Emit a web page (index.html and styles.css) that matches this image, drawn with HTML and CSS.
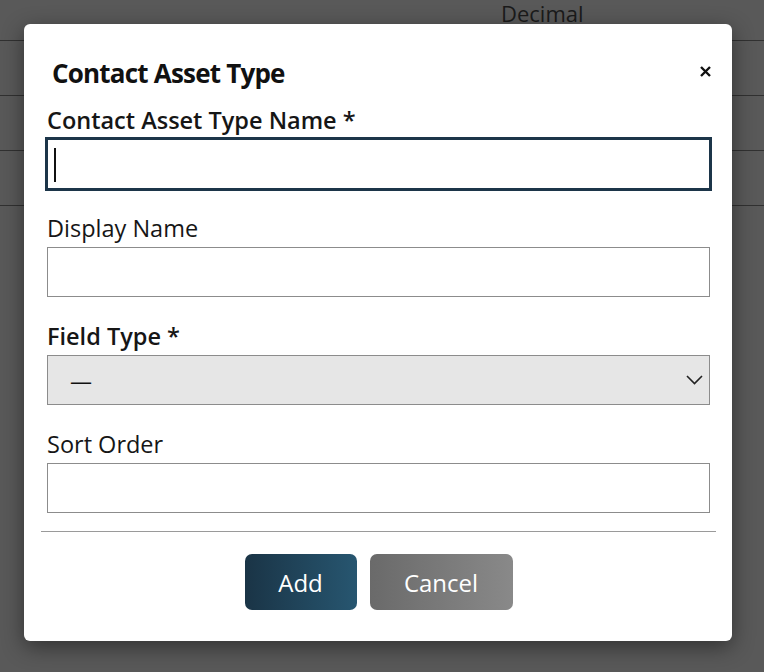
FILE: index.html
```html
<!DOCTYPE html>
<html lang="en">
<head>
<meta charset="utf-8">
<title>Contact Asset Type</title>
<link rel="stylesheet" href="styles.css">
</head>
<body>
<div class="bg-table">
  <div class="bg-row bg-head"><span></span><span class="bg-cell">Decimal</span></div>
  <div class="bg-row"></div>
  <div class="bg-row"></div>
  <div class="bg-row"></div>
</div>

<div class="modal">
  <button class="close" type="button" aria-label="Close">
    <svg width="11" height="11" viewBox="0 0 11 11"><path d="M1 1 L10 10 M10 1 L1 10" stroke="#111" stroke-width="2.4" stroke-linecap="butt" fill="none"/></svg>
  </button>
  <div class="modal-body">
    <h2 class="title">Contact Asset Type</h2>

    <div class="field">
      <label class="label strong">Contact Asset Type Name *</label>
      <div class="input-wrap">
        <input class="input focused" type="text">
        <span class="caret"></span>
      </div>
    </div>

    <div class="field">
      <label class="label">Display Name</label>
      <input class="input" type="text">
    </div>

    <div class="field">
      <label class="label strong">Field Type *</label>
      <div class="input-wrap">
        <select class="input select"><option>—</option></select>
        <svg class="chevron" width="17" height="10" viewBox="0 0 17 10"><path d="M1 1 L8.5 8.5 L16 1" stroke="#222" stroke-width="1.6" fill="none"/></svg>
      </div>
    </div>

    <div class="field last">
      <label class="label">Sort Order</label>
      <input class="input" type="text">
    </div>
  </div>

  <div class="divider"></div>

  <div class="actions">
    <button class="btn btn-add" type="button">Add</button>
    <button class="btn btn-cancel" type="button">Cancel</button>
  </div>
</div>
</body>
</html>
```

FILE: styles.css
```css
html, body {
  margin: 0;
  padding: 0;
}
body {
  width: 764px;
  height: 672px;
  overflow: hidden;
  background: #595959;
  font-family: "Open Sans", "Liberation Sans", sans-serif;
  color: #111;
  position: relative;
}

.bg-row {
  height: 54px;
  border-bottom: 1px solid #313131;
  display: grid;
  grid-template-columns: 501px 1fr;
}
.bg-head {
  height: 40px;
}
.bg-cell {
  font-size: 22px;
  line-height: 26px;
  color: #1b1b1b;
}

.modal {
  position: absolute;
  left: 24px;
  top: 24px;
  width: 708px;
  box-sizing: border-box;
  padding: 32px 16px 31px 17px;
  background: #fff;
  border-radius: 6px;
  box-shadow: 0 6px 22px rgba(0, 0, 0, 0.45);
}

.close {
  position: absolute;
  left: 676px;
  top: 42px;
  margin: 0;
  padding: 0;
  border: 0;
  background: none;
  width: 11px;
  height: 11px;
  display: block;
}
.close svg { display: block; }

.modal-body {
  padding: 0 6px;
}

.title {
  margin: 0 0 16px 5px;
  font-size: 26px;
  font-weight: 700;
  line-height: 34px;
  letter-spacing: -0.8px;
  color: #111;
}

.field {
  margin-bottom: 25px;
}
.field.last {
  margin-bottom: 0;
}

.label {
  display: block;
  font-size: 23.5px;
  line-height: 29px;
  margin-bottom: 4px;
  color: #161616;
}
.label.strong {
  font-weight: 600;
}

.input-wrap {
  position: relative;
}

.input {
  display: block;
  width: 100%;
  height: 50px;
  box-sizing: border-box;
  margin: 0;
  border: 1px solid #8c8c8c;
  background: #fff;
  font-family: "Open Sans", "Liberation Sans", sans-serif;
  font-size: 20px;
  color: #111;
  padding: 0 10px;
  border-radius: 0;
}
.input.focused {
  border: 1px solid #1c3549;
  outline: 2px solid #1c3549;
}

.caret {
  position: absolute;
  left: 7px;
  top: 9px;
  width: 2px;
  height: 34px;
  background: #111;
}

.select {
  -webkit-appearance: none;
  appearance: none;
  background: #e6e6e6;
  padding-left: 22px;
  font-size: 22px;
}
.chevron {
  position: absolute;
  right: 7px;
  top: 20px;
}

.divider {
  height: 1px;
  background: #9a9a9a;
  margin-top: 18px;
}

.actions {
  display: flex;
  justify-content: center;
  gap: 13px;
  margin-top: 22px;
}
.btn {
  height: 56px;
  border: 0;
  border-radius: 7px;
  color: #fff;
  font-family: "Open Sans", "Liberation Sans", sans-serif;
  font-size: 24px;
  padding: 0;
}
.btn-add {
  width: 112px;
  background: linear-gradient(90deg, #1a3446 0%, #275670 100%);
}
.btn-cancel {
  width: 143px;
  background: linear-gradient(90deg, #6a6a6a 0%, #898989 100%);
}
```
